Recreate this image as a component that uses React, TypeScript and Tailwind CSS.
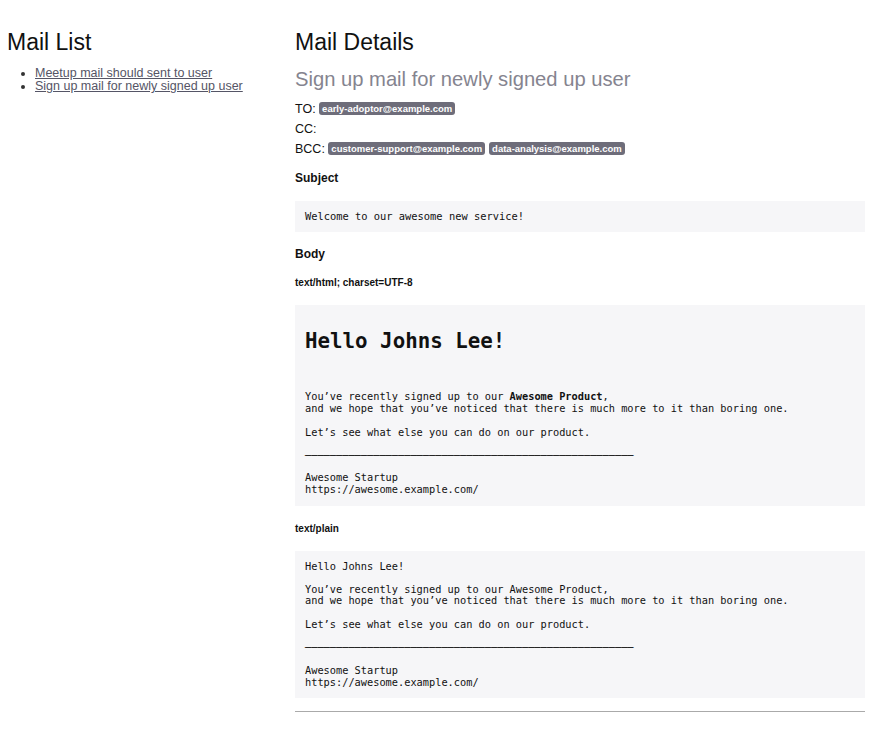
const mono = { fontFamily: '"DejaVu Sans Mono", monospace' };

const mails = ['Meetup mail should sent to user', 'Sign up mail for newly signed up user'];

function Badge({ children }: { children: string }) {
  return (
    <span className="mr-[4px] inline-block rounded-[3px] bg-[#6e6d7a] px-[3px] align-[1px] text-[9.5px] font-bold leading-[13px] text-white">
      {children}
    </span>
  );
}

const dashes = '─'.repeat(53);

export default function App() {
  return (
    <div className="flex min-h-[733px] bg-white px-[7px] text-[#111] font-['Liberation_Sans',Arial,sans-serif]">
      <aside className="w-[288px] shrink-0 pt-[28px]">
        <h2 className="text-[23px] leading-[28px]">Mail List</h2>
        <ul className="mt-[11px] list-disc pl-[28px] text-[12.5px] leading-[13px] text-[#555566] marker:text-[#333]">
          {mails.map((m) => (
            <li key={m}>
              <a href="#" className="underline">{m}</a>
            </li>
          ))}
        </ul>
      </aside>

      <main className="w-[570px] pt-[28px]">
        <h2 className="text-[23px] leading-[28px]">Mail Details</h2>
        <h3 className="mt-[11px] text-[20.2px] leading-[24px] text-[#85848f]">Sign up mail for newly signed up user</h3>
        <div className="mt-[8px] text-[12.5px] leading-[20px]">
          <div>
            TO: <Badge>early-adoptor@example.com</Badge>
          </div>
          <div>CC:</div>
          <div>
            BCC: <Badge>customer-support@example.com</Badge>
            <Badge>data-analysis@example.com</Badge>
          </div>
        </div>

        <h4 className="mt-[12px] text-[12px] font-bold leading-[14px]">Subject</h4>
        <pre style={mono} className="mt-[16px] bg-[#f6f6f8] px-[10px] py-[10px] text-[10.4px] leading-[11px]">
          Welcome to our awesome new service!
        </pre>

        <h4 className="mt-[15px] text-[12px] font-bold leading-[14px]">Body</h4>
        <h5 className="mt-[16px] text-[10px] font-bold leading-[12px]">text/html; charset=UTF-8</h5>
        <div style={mono} className="mt-[16px] bg-[#f6f6f8] px-[10px] pt-[23px] pb-[10px] text-[10.3px] leading-[11.6px]">
          <h1 className="text-[20.8px] font-bold leading-[26px]">Hello Johns Lee!</h1>
          <p className="mt-[37px]">
            You’ve recently signed up to our <b>Awesome Product</b>,
            <br />
            and we hope that you’ve noticed that there is much more to it than boring one.
          </p>
          <p className="mt-[13px]">Let’s see what else you can do on our product.</p>
          <p className="mt-[11px]">{dashes}</p>
          <p className="mt-[11px]">
            Awesome Startup
            <br />
            https://awesome.example.com/
          </p>
        </div>

        <h5 className="mt-[17px] text-[10px] font-bold leading-[12px]">text/plain</h5>
        <pre style={mono} className="mt-[16px] bg-[#f6f6f8] px-[10px] py-[10px] text-[10.3px] leading-[11.6px]">
{`Hello Johns Lee!

You’ve recently signed up to our Awesome Product,
and we hope that you’ve noticed that there is much more to it than boring one.

Let’s see what else you can do on our product.

${dashes}

Awesome Startup
https://awesome.example.com/`}
        </pre>
        <hr className="mt-[13px] border-t-[1.5px] border-[#aaa]" />
      </main>
    </div>
  );
}
